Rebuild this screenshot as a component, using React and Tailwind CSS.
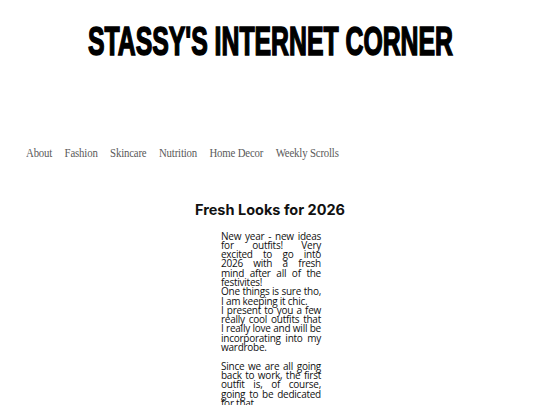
import React from "react";

const navItems = ["About", "Fashion", "Skincare", "Nutrition", "Home Decor", "Weekly Scrolls"];

export default function App() {
  return (
    <div className="min-h-screen w-[540px] h-[405px] overflow-hidden bg-white">
      {/* header */}
      <div className="flex justify-center pt-[19px]">
        <h1
          className="whitespace-nowrap text-[40px] leading-[44px] font-bold text-black scale-x-[0.62] [-webkit-text-stroke:1.6px_black]"
          style={{ fontFamily: '"Liberation Sans", Arial, sans-serif' }}
        >
          STASSY'S INTERNET CORNER
        </h1>
      </div>

      {/* nav */}
      <nav
        className="mt-[80px] ml-[26px] flex items-center gap-[15px] whitespace-nowrap origin-left scale-x-[0.83] text-[13px] text-[#5a5a5a] tracking-[-0.2px]"
        style={{ fontFamily: '"Liberation Serif", serif' }}
      >
        {navItems.map((n) => (
          <span key={n}>{n}</span>
        ))}
      </nav>

      {/* post */}
      <div className="mt-[37px] flex flex-col items-center">
        <h2
          className="text-[14.5px] font-bold text-[#111] leading-[20px]"
          style={{ fontFamily: 'Inter, "Noto Sans", sans-serif' }}
        >
          Fresh Looks for 2026
        </h2>
        <div
          className="mt-[12px] ml-[2px] w-[100px] text-[10px] leading-[9.3px] tracking-[-0.25px] text-[#111] text-justify"
          style={{ fontFamily: '"Open Sans", sans-serif' }}
        >
          <p>New year - new ideas for outfits! Very excited to go into 2026 with a fresh mind after all of the festivites!</p>
          <p>One things is sure tho, I am keeping it chic.</p>
          <p>I present to you a few really cool outfits that I really love and will be incorporating into my wardrobe.</p>
          <p className="mt-[9.3px]">Since we are all going back to work, the first outfit is, of course, going to be dedicated for that.</p>
        </div>
      </div>
    </div>
  );
}
